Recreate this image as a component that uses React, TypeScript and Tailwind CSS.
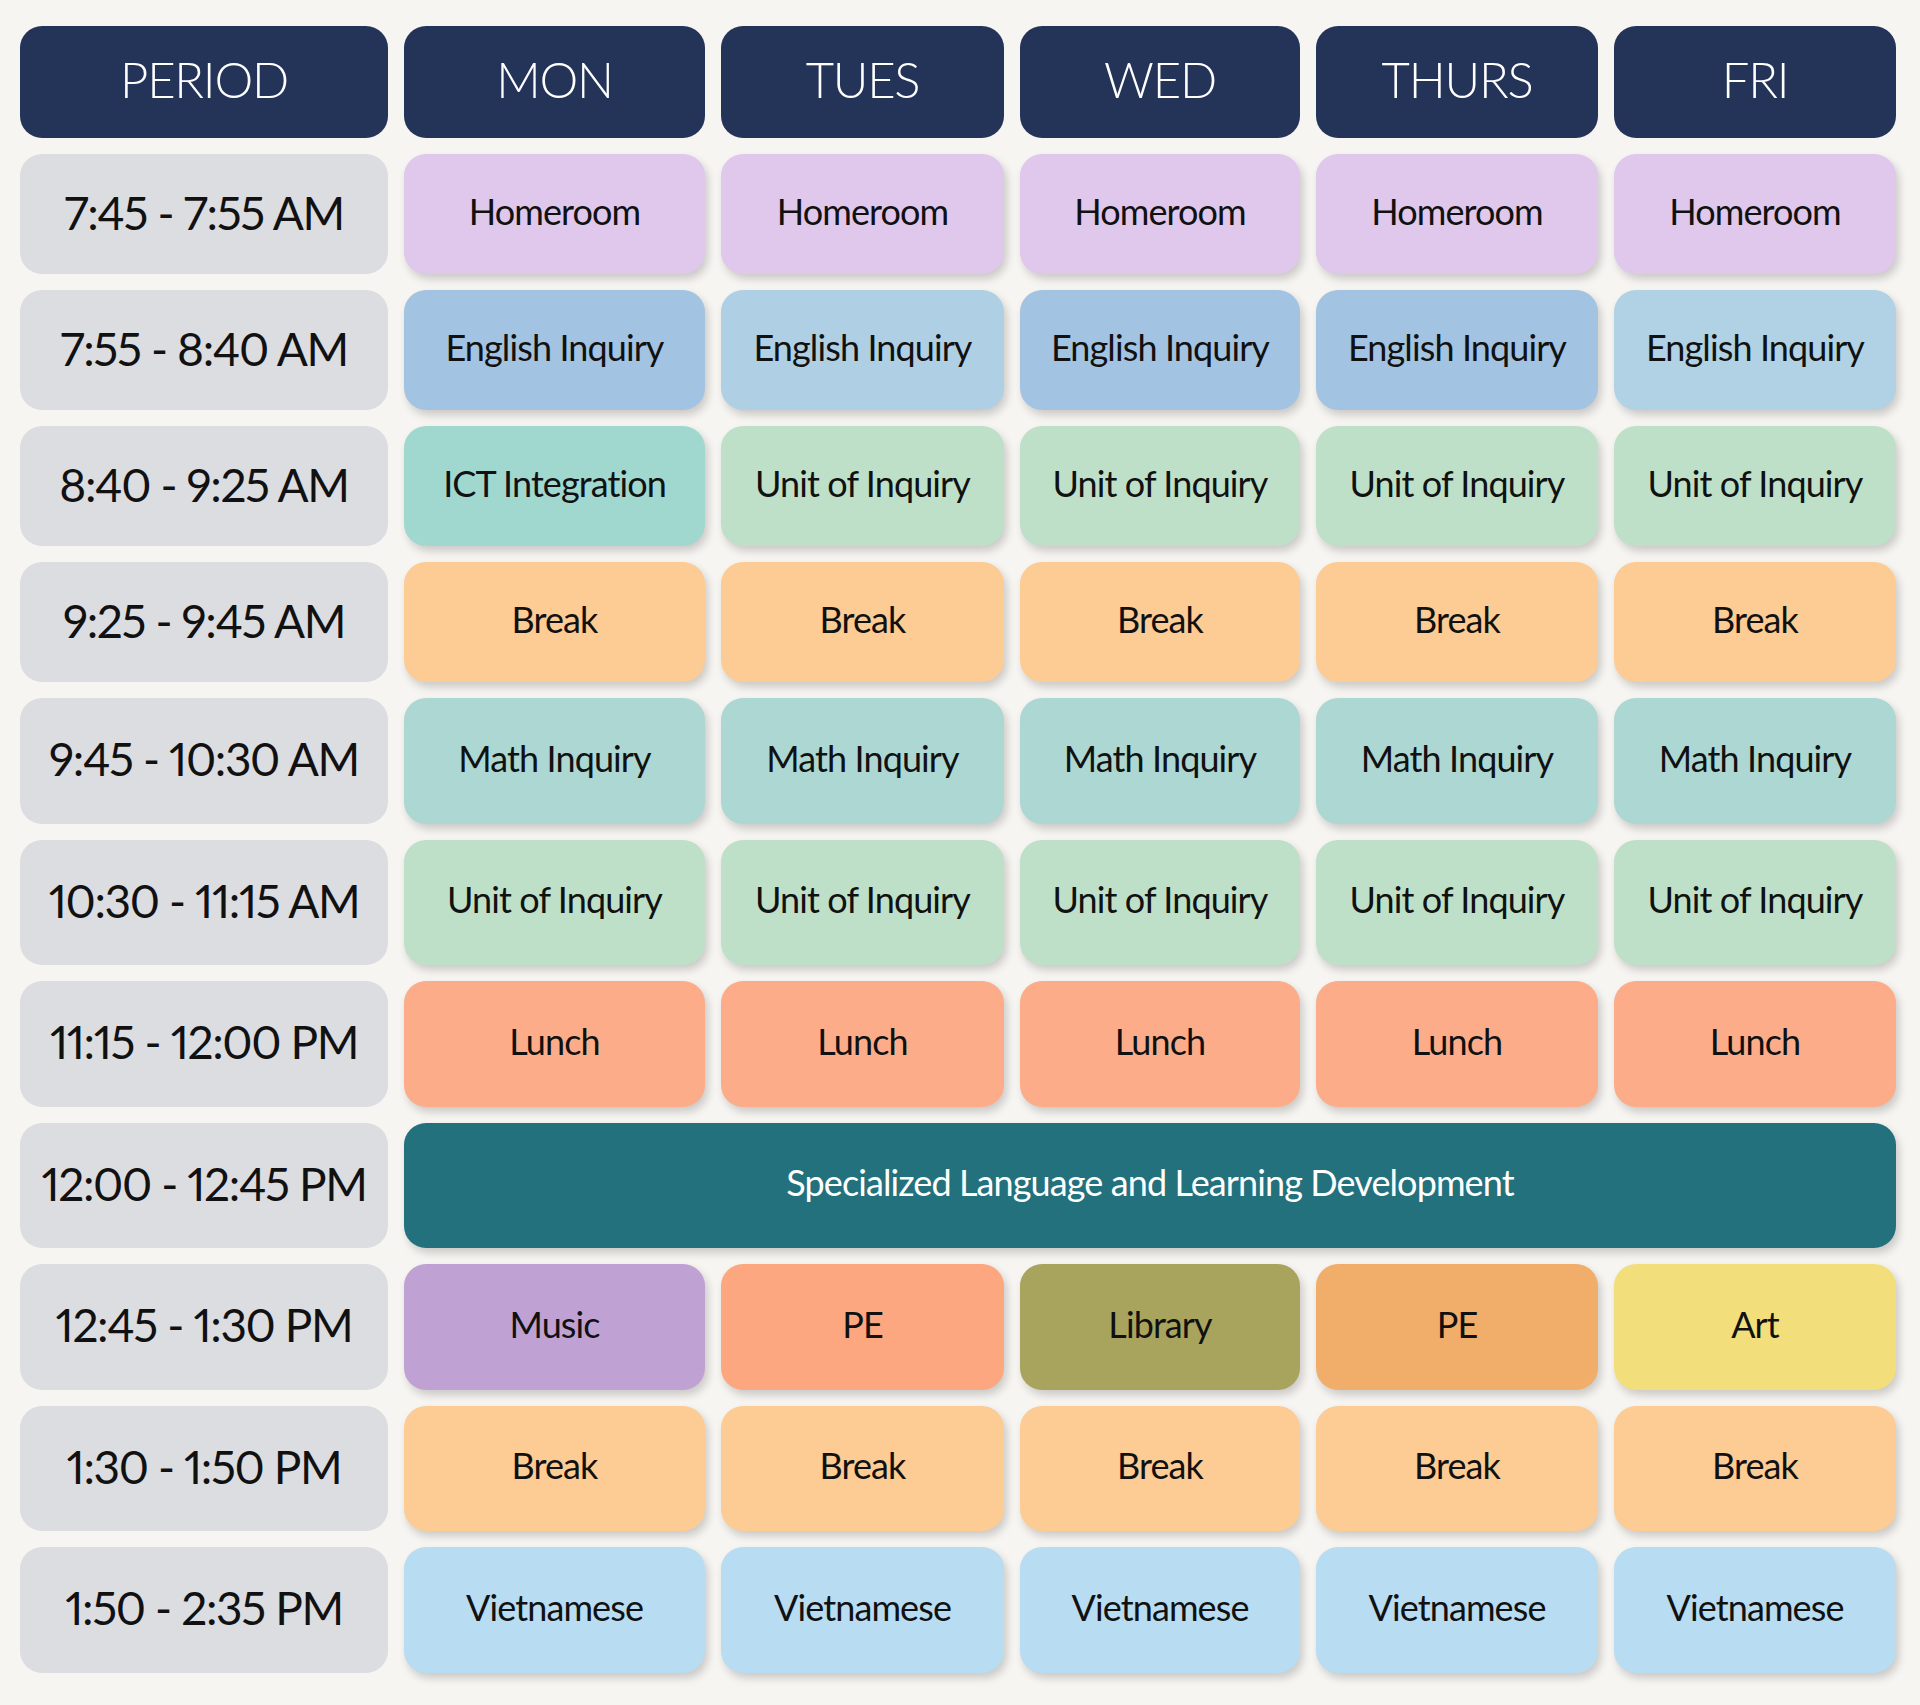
const days = ["MON", "TUES", "WED", "THURS", "FRI"];

type Cell = { label: string; bg: string };

const rows: { time: string; h: string; cells: Cell[] | "span" }[] = [
  {
    time: "7:45 - 7:55 AM",
    h: "h-[120px]",
    cells: Array(5).fill({ label: "Homeroom", bg: "bg-[#e0c7ec]" }),
  },
  {
    time: "7:55 - 8:40 AM",
    h: "h-[120px]",
    cells: [
      { label: "English Inquiry", bg: "bg-[#a3c3e2]" },
      { label: "English Inquiry", bg: "bg-[#afd0e4]" },
      { label: "English Inquiry", bg: "bg-[#a3c3e2]" },
      { label: "English Inquiry", bg: "bg-[#a3c3e2]" },
      { label: "English Inquiry", bg: "bg-[#b0d2e4]" },
    ],
  },
  {
    time: "8:40 - 9:25 AM",
    h: "h-[120px]",
    cells: [
      { label: "ICT Integration", bg: "bg-[#a0d8d0]" },
      { label: "Unit of Inquiry", bg: "bg-[#bfe0c8]" },
      { label: "Unit of Inquiry", bg: "bg-[#bfe0c8]" },
      { label: "Unit of Inquiry", bg: "bg-[#bfe0c8]" },
      { label: "Unit of Inquiry", bg: "bg-[#bfe0c8]" },
    ],
  },
  {
    time: "9:25 - 9:45 AM",
    h: "h-[120px]",
    cells: Array(5).fill({ label: "Break", bg: "bg-[#fdcb94]" }),
  },
  {
    time: "9:45 - 10:30 AM",
    h: "h-[125.5px]",
    cells: Array(5).fill({ label: "Math Inquiry", bg: "bg-[#add7d3]" }),
  },
  {
    time: "10:30 - 11:15 AM",
    h: "h-[125.5px]",
    cells: Array(5).fill({ label: "Unit of Inquiry", bg: "bg-[#bfe0c8]" }),
  },
  {
    time: "11:15 - 12:00 PM",
    h: "h-[125.5px]",
    cells: Array(5).fill({ label: "Lunch", bg: "bg-[#fcac89]" }),
  },
  { time: "12:00 - 12:45 PM", h: "h-[125.5px]", cells: "span" },
  {
    time: "12:45 - 1:30 PM",
    h: "h-[125.5px]",
    cells: [
      { label: "Music", bg: "bg-[#c0a1d4]" },
      { label: "PE", bg: "bg-[#fca77f]" },
      { label: "Library", bg: "bg-[#a8a45d]" },
      { label: "PE", bg: "bg-[#f1ad6a]" },
      { label: "Art", bg: "bg-[#f2df7b]" },
    ],
  },
  {
    time: "1:30 - 1:50 PM",
    h: "h-[125.5px]",
    cells: Array(5).fill({ label: "Break", bg: "bg-[#fdcb94]" }),
  },
  {
    time: "1:50 - 2:35 PM",
    h: "h-[125.5px]",
    cells: Array(5).fill({ label: "Vietnamese", bg: "bg-[#b8dcf1]" }),
  },
];

export default function App() {
  return (
    <div
      className="w-[1920px] h-[1705px] bg-[#f7f5f2] pt-[26px] pl-[20px] overflow-hidden"
      style={{ fontFamily: "Lato, 'Open Sans', sans-serif" }}
    >
      <div className="grid grid-cols-[368px_301px_283px_280px_282px_282px] gap-x-[16px] gap-y-[16px] text-[#111]">
        {/* header */}
        <div className="h-[112px] rounded-[22px] bg-[#243358] flex items-center justify-center pb-[4px] text-white text-[49px] font-light tracking-tight">
          PERIOD
        </div>
        {days.map((d) => (
          <div
            key={d}
            className="h-[112px] rounded-[22px] bg-[#243358] flex items-center justify-center pb-[4px] text-white text-[49px] font-light tracking-tight"
          >
            {d}
          </div>
        ))}

        {rows.map((r) => (
          <>
            <div
              key={r.time}
              className={`${r.h} rounded-[22px] bg-[#dcdde1] flex items-center justify-center pb-[4px] text-[46px] tracking-[-0.03em] proportional-nums`}
            >
              {r.time}
            </div>
            {r.cells === "span" ? (
              <div className="col-span-5 h-[125.5px] rounded-[22px] bg-[#23717d] flex items-center justify-center pb-[6px] text-white text-[36px] tracking-tight shadow-[3px_5px_8px_rgba(0,0,0,0.18)]">
                Specialized Language and Learning Development
              </div>
            ) : (
              r.cells.map((c, i) => (
                <div
                  key={r.time + i}
                  className={`${r.h} ${c.bg} rounded-[22px] flex items-center justify-center pb-[6px] text-[36px] tracking-tight shadow-[3px_5px_8px_rgba(0,0,0,0.18)]`}
                >
                  {c.label}
                </div>
              ))
            )}
          </>
        ))}
      </div>
    </div>
  );
}
